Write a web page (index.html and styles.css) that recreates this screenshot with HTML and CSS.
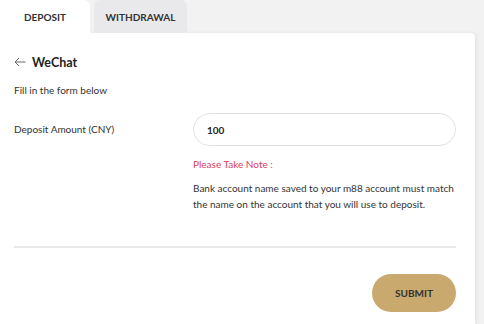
FILE: index.html
```html
<!DOCTYPE html>
<html lang="en">
<head>
    <meta charset="UTF-8">
    <title>Deposit - WeChat</title>
    <link rel="stylesheet" href="styles.css">
</head>
<body>
    <div class="wrap">
        <nav class="tabs">
            <a class="tab active">DEPOSIT</a>
            <a class="tab">WITHDRAWAL</a>
        </nav>

        <div class="card">
            <h2 class="title">
                <span class="back">
                    <svg width="12" height="10" viewBox="0 0 12 10"><path d="M11.5 5H1M5 1L1 5l4 4" fill="none" stroke="#666" stroke-width="1"/></svg>
                </span>
                WeChat
            </h2>
            <p class="hint">Fill in the form below</p>

            <div class="row">
                <label class="label">Deposit Amount (CNY)</label>
                <div class="field">
                    <input class="input" type="text" value="100">
                    <p class="note-title">Please Take Note :</p>
                    <p class="note">Bank account name saved to your m88 account must match the name on the account that you will use to deposit.</p>
                </div>
            </div>

            <hr class="divider">

            <div class="actions">
                <button class="submit">SUBMIT</button>
            </div>
        </div>
    </div>
</body>
</html>
```

FILE: styles.css
```css
* {
    margin: 0;
    padding: 0;
    box-sizing: border-box;
}

body {
    font-family: Lato, "Open Sans", sans-serif;
    background: #f2f2f2;
    color: #333;
    font-size: 10px;
}

.wrap {
    padding-right: 9px;
}

.tabs {
    display: flex;
    gap: 4px;
    height: 33px;
}

.tab {
    display: flex;
    align-items: center;
    justify-content: center;
    font-weight: bold;
    font-size: 10px;
    color: #333;
    background: #e9e9eb;
    border-radius: 6px 6px 0 0;
}

.tab:first-child {
    width: 90px;
}

.tab:last-child {
    width: 93px;
}

.tab.active {
    background: #fff;
    border-radius: 0 6px 0 0;
}

.card {
    background: #fff;
    border-radius: 0 4px 0 0;
    box-shadow: 2px 0 4px rgba(0, 0, 0, 0.06);
    padding: 19px 19px 11px 14px;
    min-height: 291px;
}

.title {
    display: flex;
    align-items: center;
    gap: 6px;
    font-size: 12.5px;
    color: #222;
    font-weight: bold;
    height: 20px;
}

.back {
    display: flex;
}

.hint {
    margin-top: 11px;
    height: 14px;
    line-height: 14px;
}

.row {
    display: grid;
    grid-template-columns: 179px 1fr;
    margin-top: 16px;
}

.label {
    line-height: 33px;
}

.input {
    display: block;
    width: 100%;
    height: 33px;
    border: 1px solid #e2e2e2;
    border-radius: 17px;
    padding: 0 13px;
    font-family: inherit;
    font-size: 10px;
    font-weight: bold;
    color: #222;
    outline: none;
}

.note-title {
    color: #d9425b;
    margin-top: 10px;
    line-height: 16px;
}

.note {
    margin-top: 8px;
    line-height: 16px;
}

.divider {
    border: none;
    border-top: 2px solid #e8e8e8;
    margin-top: 34px;
}

.actions {
    display: flex;
    justify-content: flex-end;
    margin-top: 26px;
}

.submit {
    width: 84px;
    height: 38px;
    border: none;
    border-radius: 19px;
    background: #c9a96e;
    color: #333;
    font-family: inherit;
    font-weight: bold;
    font-size: 10px;
}
```
